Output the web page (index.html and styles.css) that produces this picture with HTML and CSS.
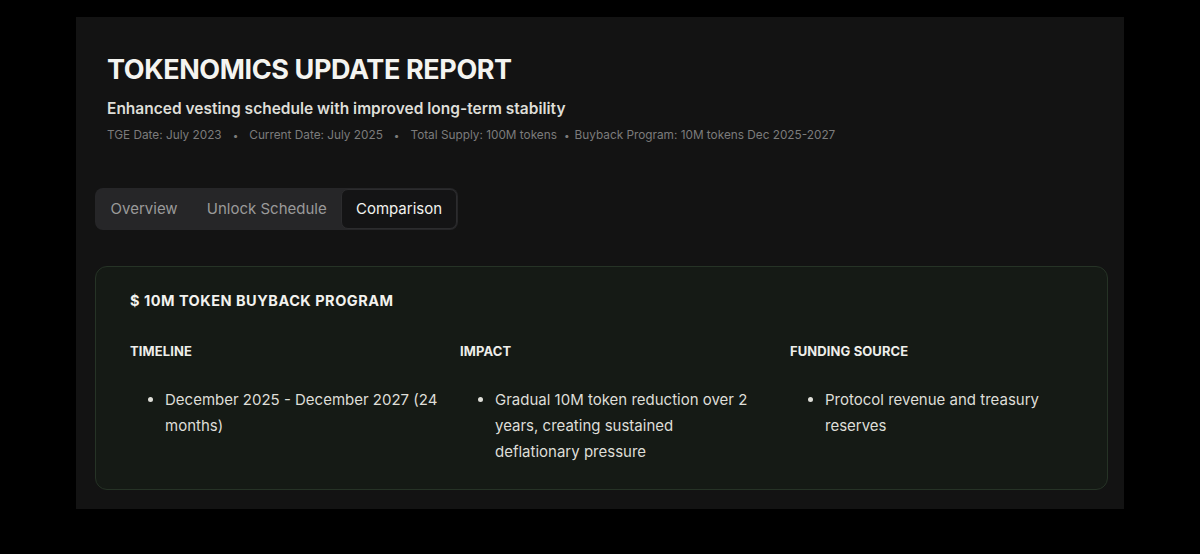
FILE: index.html
```html
<!DOCTYPE html>
<html lang="en">
<head>
<meta charset="utf-8">
<title>Tokenomics Update Report</title>
<link rel="stylesheet" href="styles.css">
</head>
<body>
<main class="panel">
  <header class="header">
    <h1 class="title">TOKENOMICS UPDATE REPORT</h1>
    <p class="subtitle">Enhanced vesting schedule with improved long-term stability</p>
    <p class="meta">
      <span>TGE Date: July 2023</span>
      <span class="sep">•</span>
      <span>Current Date: July 2025</span>
      <span class="sep">•</span>
      <span>Total Supply: 100M tokens</span>
      <span class="sep tight">•</span>
      <span>Buyback Program: 10M tokens Dec 2025-2027</span>
    </p>
  </header>

  <nav class="tabs">
    <button class="tab">Overview</button>
    <button class="tab">Unlock Schedule</button>
    <button class="tab active">Comparison</button>
  </nav>

  <section class="card">
    <h2 class="card-title">$ 10M TOKEN BUYBACK PROGRAM</h2>
    <div class="cols">
      <div class="col">
        <h3 class="col-title">TIMELINE</h3>
        <ul class="list wide">
          <li>December 2025 - December 2027 (24 months)</li>
        </ul>
      </div>
      <div class="col">
        <h3 class="col-title">IMPACT</h3>
        <ul class="list">
          <li>Gradual 10M token reduction over 2 years, creating sustained deflationary pressure</li>
        </ul>
      </div>
      <div class="col">
        <h3 class="col-title">FUNDING SOURCE</h3>
        <ul class="list">
          <li>Protocol revenue and treasury reserves</li>
        </ul>
      </div>
    </div>
  </section>
</main>
</body>
</html>
```

FILE: styles.css
```css
* { box-sizing: border-box; }

html, body {
  margin: 0;
  padding: 0;
  background: #000;
  height: 100%;
}

body {
  font-family: Inter, "Noto Sans", "Liberation Sans", sans-serif;
  color: #e8e8e4;
  padding: 17px 76px 45px 76px;
}

.panel {
  background: #131313;
  width: 1048px;
  height: 492px;
  padding: 35px 16px 0 19px;
}

.header {
  padding-left: 12px;
}

.title {
  margin: 0;
  font-size: 27px;
  line-height: 36px;
  font-weight: 700;
  letter-spacing: -0.4px;
  color: #f4f4f0;
}

.subtitle {
  margin: 11px 0 0;
  font-size: 15.5px;
  line-height: 20px;
  font-weight: 600;
  color: #deded8;
}

.meta {
  margin: 8px 0 0;
  font-size: 11.8px;
  line-height: 16px;
  color: #7c7c7c;
  display: flex;
  align-items: center;
  gap: 9px;
}

.meta .sep {
  margin: 0 2px;
  font-size: 10px;
}

.meta .sep.tight {
  margin: 0 -4px 0 -2px;
}

.tabs {
  margin-top: 45px;
  display: inline-flex;
  background: #262628;
  border-radius: 8px;
  padding: 1px;
}

.tab {
  font-family: inherit;
  font-size: 15px;
  line-height: 20px;
  color: #9a9a9a;
  background: transparent;
  border: 1px solid transparent;
  border-radius: 7px;
  height: 40px;
  padding: 0 13.6px;
  cursor: pointer;
}

.tab.active {
  background: #141415;
  border-color: #2c2c2e;
  color: #f2f2ee;
}

.card {
  margin-top: 36px;
  background: #151a15;
  border: 1px solid #263326;
  border-radius: 12px;
  padding: 24px 0 25px 34px;
  height: 224px;
}

.card-title {
  margin: 0;
  font-size: 14.5px;
  line-height: 20px;
  font-weight: 700;
  letter-spacing: 0.5px;
  color: #f2f2ee;
}

.cols {
  margin-top: 31px;
  display: grid;
  grid-template-columns: repeat(3, 315px);
  column-gap: 15px;
}

.col-title {
  margin: 0;
  font-size: 13px;
  line-height: 18px;
  font-weight: 700;
  letter-spacing: 0.1px;
  color: #eeeeea;
}

.list {
  margin: 27px 0 0;
  padding: 0 22px 0 35px;
  font-size: 15px;
  line-height: 26px;
  color: #deded8;
}

.list.wide {
  padding-right: 0;
}
```
